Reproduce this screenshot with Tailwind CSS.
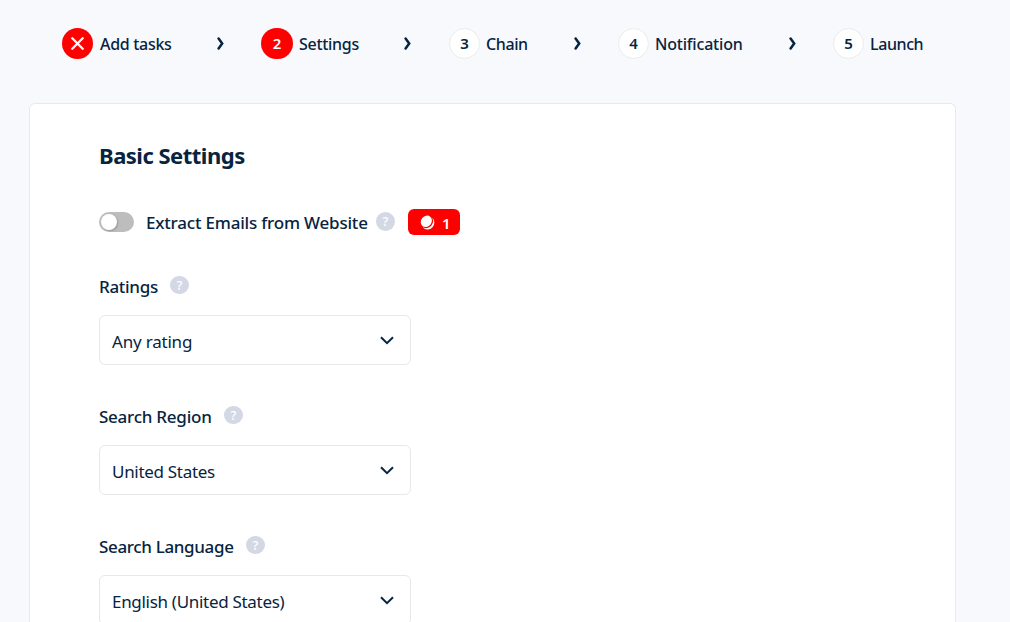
<!DOCTYPE html>
<html lang="en">
<head>
  <meta charset="UTF-8" />
  <meta name="viewport" content="width=device-width, initial-scale=1" />
  <title>Basic Settings</title>
  <script src="https://cdn.jsdelivr.net/npm/@tailwindcss/browser@4"></script>
</head>
<body class="bg-[#f8f9fd] text-[#062440] font-['Noto_Sans',sans-serif] h-screen overflow-hidden flex flex-col">

  <!-- Steps -->
  <nav class="flex items-center h-[31px] shrink-0 mt-7 ml-[62px] text-base font-medium whitespace-nowrap">
    <div class="flex items-center gap-[7px]">
      <span class="size-[31px] rounded-full bg-[#ff0000] flex items-center justify-center">
        <svg class="size-[13px]" viewBox="0 0 13 13" fill="none" stroke="#fff" stroke-width="2.3" stroke-linecap="round"><path d="M1.3 1.3 11.7 11.7M11.7 1.3 1.3 11.7" /></svg>
      </span>
      <span class="w-[72px] pt-px tracking-[-0.3px]">Add tasks</span>
    </div>
    <svg class="w-[7px] h-[13px] ml-[45px] mr-[37px]" viewBox="0 0 7 13" fill="none" stroke="#062440" stroke-width="2.5" stroke-linecap="round"><path d="M1.6 1.5 5.2 6.5 1.6 11.5" /></svg>
    <div class="flex items-center gap-1.5">
      <span class="w-8 h-[31px] rounded-full bg-[#ff0000] text-white text-[15px] font-semibold flex items-center justify-center">2</span>
      <span class="w-[60px] pt-px tracking-[-0.3px]">Settings</span>
    </div>
    <svg class="w-[7px] h-[13px] ml-[45px] mr-[38px]" viewBox="0 0 7 13" fill="none" stroke="#062440" stroke-width="2.5" stroke-linecap="round"><path d="M1.6 1.5 5.2 6.5 1.6 11.5" /></svg>
    <div class="flex items-center gap-1.5">
      <span class="size-[31px] rounded-full border border-[#ebebeb] bg-white text-[15px] font-semibold flex items-center justify-center">3</span>
      <span class="w-[43px] pt-px tracking-[-0.4px]">Chain</span>
    </div>
    <svg class="w-[7px] h-[13px] ml-[45px] mr-[37px]" viewBox="0 0 7 13" fill="none" stroke="#062440" stroke-width="2.5" stroke-linecap="round"><path d="M1.6 1.5 5.2 6.5 1.6 11.5" /></svg>
    <div class="flex items-center gap-1.5">
      <span class="size-[31px] rounded-full border border-[#ebebeb] bg-white text-[15px] font-semibold flex items-center justify-center">4</span>
      <span class="w-[89px] pt-px tracking-[-0.2px]">Notification</span>
    </div>
    <svg class="w-[7px] h-[13px] ml-[45px] mr-[37px]" viewBox="0 0 7 13" fill="none" stroke="#062440" stroke-width="2.5" stroke-linecap="round"><path d="M1.6 1.5 5.2 6.5 1.6 11.5" /></svg>
    <div class="flex items-center gap-1.5">
      <span class="size-[31px] rounded-full border border-[#ebebeb] bg-white text-[15px] font-semibold flex items-center justify-center">5</span>
      <span class="w-[54px] pt-px tracking-[-0.4px]">Launch</span>
    </div>
  </nav>

  <!-- Settings card -->
  <main class="mt-11 ml-[29px] w-[927px] flex-1 min-h-0 overflow-hidden bg-white border border-b-0 border-[#e8e9ed] rounded-t-md pt-[35px] pl-[69px] whitespace-nowrap">
    <h1 class="text-[22px] leading-8 font-bold tracking-[-0.5px]">Basic Settings</h1>

    <!-- Email toggle -->
    <div class="flex items-center h-[26px] mt-[38px]">
      <span class="w-[35px] h-5 rounded-full bg-[#bdbdbd] p-0.5 flex items-center">
        <span class="size-4 rounded-full bg-white shadow-[1px_1px_2px_#0003]"></span>
      </span>
      <span class="ml-3 w-[222px] pt-px text-[17px] leading-6 font-medium tracking-[-0.2px]">Extract Emails from Website</span>
      <span class="ml-2 mb-px size-[19px] rounded-full bg-[#d4d8e5] text-white text-[13px] leading-none font-medium flex items-center justify-center">?</span>
      <span class="ml-[13px] w-[52px] h-[26px] rounded-md bg-[#ff0000] text-white flex items-center pl-3">
        <!-- Coin with the edge of a second one behind it -->
        <svg class="size-[15px]" viewBox="0 0 15 15">
          <ellipse cx="8.1" cy="8.1" rx="6" ry="6.6" transform="rotate(40 8.1 8.1)" fill="#fff" />
          <ellipse cx="6.7" cy="6.6" rx="6.2" ry="6.8" transform="rotate(40 6.7 6.6)" fill="#ff0000" />
          <ellipse cx="6.3" cy="6.3" rx="5.2" ry="6.1" transform="rotate(40 6.3 6.3)" fill="#fff" />
        </svg>
        <span class="ml-[7px] pt-0.5 text-[15px] leading-5 font-semibold">1</span>
      </span>
    </div>

    <!-- Ratings -->
    <section class="mt-[37px]">
      <div class="flex items-center h-7">
        <span class="w-[60px] pt-0.5 text-[17px] font-medium tracking-[-0.3px]">Ratings</span>
        <span class="ml-[11px] mb-0.5 w-[19px] h-[18px] rounded-full bg-[#d4d8e5] text-white text-[13px] leading-none font-medium flex items-center justify-center">?</span>
      </div>
      <div class="mt-[15px] w-[312px] h-[50px] border border-[#e8e8e8] rounded-md bg-white flex items-center justify-between pl-3 pr-4">
        <span class="pt-[3px] text-[17px] tracking-[-0.2px]">Any rating</span>
        <svg class="w-[14px] h-[9px]" viewBox="0 0 14 9" fill="none" stroke="#062440" stroke-width="2"><path d="M1 1.2 7 7.2 13 1.2" /></svg>
      </div>
    </section>

    <!-- Search region -->
    <section class="mt-[37px]">
      <div class="flex items-center h-7">
        <span class="w-[114px] pt-0.5 text-[17px] font-medium tracking-[-0.25px]">Search Region</span>
        <span class="ml-[11px] mb-0.5 w-[19px] h-[18px] rounded-full bg-[#d4d8e5] text-white text-[13px] leading-none font-medium flex items-center justify-center">?</span>
      </div>
      <div class="mt-[15px] w-[312px] h-[50px] border border-[#e8e8e8] rounded-md bg-white flex items-center justify-between pl-3 pr-4">
        <span class="pt-[3px] text-[17px] tracking-[-0.3px]">United States</span>
        <svg class="w-[14px] h-[9px]" viewBox="0 0 14 9" fill="none" stroke="#062440" stroke-width="2"><path d="M1 1.2 7 7.2 13 1.2" /></svg>
      </div>
    </section>

    <!-- Search language -->
    <section class="mt-[37px]">
      <div class="flex items-center h-7">
        <span class="w-[136px] pt-0.5 text-[17px] font-medium tracking-[-0.35px]">Search Language</span>
        <span class="ml-[11px] mb-0.5 w-[19px] h-[18px] rounded-full bg-[#d4d8e5] text-white text-[13px] leading-none font-medium flex items-center justify-center">?</span>
      </div>
      <div class="mt-[15px] w-[312px] h-[50px] border border-[#e8e8e8] rounded-md bg-white flex items-center justify-between pl-3 pr-4">
        <span class="pt-[3px] text-[17px] tracking-[-0.3px]">English (United States)</span>
        <svg class="w-[14px] h-[9px]" viewBox="0 0 14 9" fill="none" stroke="#062440" stroke-width="2"><path d="M1 1.2 7 7.2 13 1.2" /></svg>
      </div>
    </section>
  </main>

</body>
</html>
